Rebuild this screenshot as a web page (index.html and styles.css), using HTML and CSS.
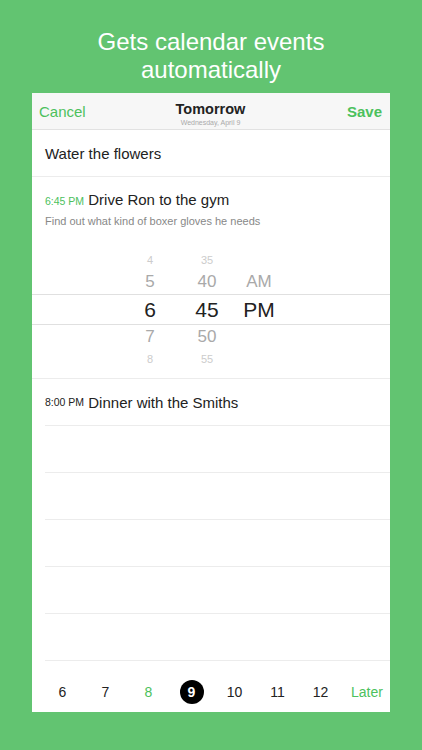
FILE: index.html
```html
<!DOCTYPE html>
<html lang="en">
<head>
  <meta charset="UTF-8" />
  <meta name="viewport" content="width=device-width, initial-scale=1.0"/>
  <title>Gets calendar events automatically</title>
  <link rel="stylesheet" href="styles.css">
</head>
<body>

  <h1 class="headline">Gets calendar events<br>automatically</h1>

  <div class="card">
    <div class="topbar">
      <span class="link">Cancel</span>
      <div class="title">
        <div class="title-main">Tomorrow</div>
        <div class="title-sub">Wednesday, April 9</div>
      </div>
      <span class="link save">Save</span>
    </div>

    <div class="row first">Water the flowers</div>

    <div class="event">
      <div class="event-title"><span class="time green">6:45 PM</span> Drive Ron to the gym</div>
      <div class="event-note">Find out what kind of boxer gloves he needs</div>
    </div>

    <div class="picker">
      <div class="picker-row far"><span>4</span><span>35</span><span></span></div>
      <div class="picker-row near"><span>5</span><span>40</span><span>AM</span></div>
      <div class="picker-row current"><span>6</span><span>45</span><span>PM</span></div>
      <div class="picker-row near"><span>7</span><span>50</span><span></span></div>
      <div class="picker-row far"><span>8</span><span>55</span><span></span></div>
    </div>

    <div class="row inset"><span class="time">8:00 PM</span>&nbsp;Dinner with the Smiths</div>
    <div class="row inset empty"></div>
    <div class="row inset empty"></div>
    <div class="row inset empty"></div>
    <div class="row inset empty"></div>
    <div class="row inset empty"></div>

    <div class="hours">
      <span>6</span>
      <span>7</span>
      <span class="green">8</span>
      <span><b class="dot">9</b></span>
      <span>10</span>
      <span>11</span>
      <span>12</span>
      <span class="green">Later</span>
    </div>
  </div>

</body>
</html>
```

FILE: styles.css
```css
body {
  margin: 0;
  background: #62c471;
  font-family: "Liberation Sans", Arial, sans-serif;
  color: #222;
}

.headline {
  margin: 0;
  padding-top: 28px;
  height: 65px;
  text-align: center;
  color: #fff;
  font-size: 24px;
  font-weight: normal;
  line-height: 28px;
}

.card {
  width: 358px;
  height: 619px;
  margin: 0 auto;
  background: #fff;
  overflow: hidden;
}

.topbar {
  height: 37px;
  box-sizing: border-box;
  background: #f7f7f7;
  border-bottom: 1px solid #e2e2e2;
  display: flex;
  align-items: center;
  justify-content: space-between;
  padding: 0 8px 0 7px;
}

.link {
  color: #4cc15d;
  font-size: 15px;
  width: 60px;
}

.save {
  text-align: right;
  font-weight: bold;
}

.title {
  text-align: center;
  align-self: flex-end;
  padding-bottom: 1px;
}

.title-main {
  font-size: 14.5px;
  font-weight: bold;
  line-height: 17px;
}

.title-sub {
  font-size: 7px;
  color: #aaa;
  line-height: 10px;
}

.row {
  height: 47px;
  box-sizing: border-box;
  display: flex;
  align-items: center;
  font-size: 15px;
  padding-left: 13px;
  border-bottom: 1px solid #ececec;
}

.row.inset {
  margin-left: 13px;
  padding-left: 0;
}

.time {
  font-size: 10.5px;
}

.green {
  color: #4cc15d;
}

.event {
  padding: 13px 0 0 13px;
  height: 63px;
  box-sizing: border-box;
}

.event-title {
  font-size: 15px;
  line-height: 20px;
}

.event-note {
  margin-top: 3px;
  font-size: 11px;
  color: #888;
  line-height: 14px;
}

.picker {
  padding: 10px 0 9px;
  border-bottom: 1px solid #ececec;
}

.picker-row {
  display: grid;
  grid-template-columns: 50px 64px 40px;
  padding-left: 93px;
  align-items: center;
  text-align: center;
}

.picker-row.far {
  height: 20px;
  font-size: 11px;
  color: #ccc;
}

.picker-row.near {
  height: 24px;
  font-size: 17px;
  color: #a9a9a9;
}

.picker-row.current {
  height: 31px;
  box-sizing: border-box;
  border-top: 1px solid #e0e0e0;
  border-bottom: 1px solid #e0e0e0;
  font-size: 21px;
  color: #222;
}

.hours {
  display: grid;
  grid-template-columns: repeat(7, 43px) 50px;
  padding: 19px 0 0 9px;
  font-size: 14px;
  text-align: center;
  align-items: center;
}

.dot {
  display: inline-block;
  width: 24px;
  height: 24px;
  line-height: 24px;
  border-radius: 50%;
  background: #000;
  color: #fff;
  font-weight: bold;
}
```
